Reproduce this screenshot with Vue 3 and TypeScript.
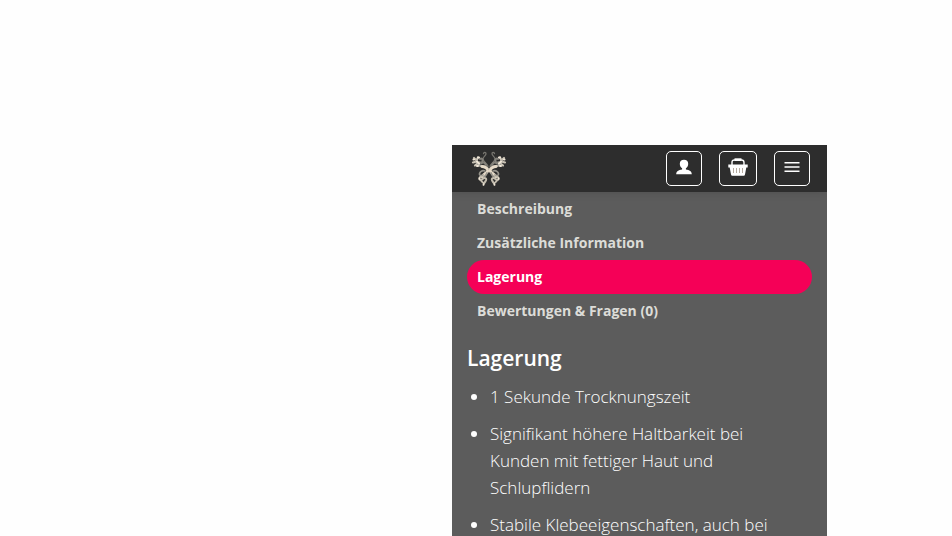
<script setup lang="ts">
import { ref } from 'vue'

const tabs: string[] = [
  'Beschreibung',
  'Zusätzliche Information',
  'Lagerung',
  'Bewertungen & Fragen (0)',
]
const active = ref<string>('Lagerung')

const facts: string[] = [
  '1 Sekunde Trocknungszeit',
  'Signifikant höhere Haltbarkeit bei Kunden mit fettiger Haut und Schlupflidern',
  'Stabile Klebeeigenschaften, auch bei',
]
</script>

<template>
  <div class="page">
    <div class="panel">
      <header class="bar">
        <a class="logo" href="#" aria-label="Startseite">
          <svg width="38" height="38" viewBox="0 0 38 38" fill="none" stroke-linecap="round">
            <g v-for="side in 2" :key="side" :transform="side === 2 ? 'translate(38 0) scale(-1 1)' : undefined">
              <path d="M13.500 3.500c.3-1.500 2.500-1.500 2.500.3 0 2-3 2.700-3 5.200 0 3 4.500 4 5 8" stroke="#77756f" stroke-width="1.300" />
              <path d="M10 9c1.500-1 3 0 2.500 2s-2 2-3 1M11 13.500c2-2 4-1 5 1.500" stroke="#85827b" stroke-width="2" />
              <path d="M4 8l2.500 2.500L8 7.500M3 12.500l3.500-1M5 15.500l3-2.500" stroke="#c9c2b4" stroke-width="2.200" />
              <path d="M6.500 11c2 2.500 1.500 4 4 5s5 .5 8 3.500" stroke="#a8a59d" stroke-width="2.200" />
              <path d="M8 7.500h1M3.500 9.500h.5M7 16h1M7 11.500l2 2" stroke="#efe6d7" stroke-width="2.100" />
              <path d="M12 16.500c3 0 5 1.500 6 4-1 3-5 3.500-6 6.500" stroke="#e6dac8" stroke-width="2.900" />
              <path d="M15 21c-3-1-5 .5-5.500 2.500s2 3 3.500 1.500M17 23c-1 2-1 3-3 4" stroke="#96938b" stroke-width="1.700" />
              <path d="M12 26.500c-3 0-3.500 3-1.500 3.500 2 .4 2-2 4-2 2.500 0 2 3 .5 3.500M11 30c0 2 2 2 3 3.500l1.500-2" stroke="#c5beb0" stroke-width="1.900" />
              <path d="M13.500 34v1M9.500 28v1" stroke="#efe6d7" stroke-width="1.700" />
            </g>
          </svg>
        </a>
        <nav class="actions" aria-label="Aktionen">
          <button class="action" type="button" aria-label="Mein Konto">
            <svg width="16" height="16" viewBox="0 0 16 16" fill="#fff">
              <path d="M8 .8C5.400 .8 3.800 2.400 3.800 4.800c0 2 .9 3.700 2.300 4.500v1.200C2.500 11 .3 12.200.2 15.200h15.600c-.1-3-2.300-4.200-5.900-4.700V9.300c1.400-.8 2.300-2.500 2.300-4.500C12.200 2.400 10.600.8 8 .8z" />
            </svg>
          </button>
          <button class="action wide" type="button" aria-label="Warenkorb">
            <svg width="20" height="18" viewBox="0 0 20 18">
              <path d="M4 7.500V4.500Q4 2 6.500 2h7Q16 2 16 4.500v3" fill="none" stroke="#fff" stroke-width="1.400" />
              <path d="M6.500 .3h7v2.700h-7z" fill="#fff" />
              <path d="M.3 6.500h19.400v3H18.300l-1.300 7q-.2 1.200-1.300 1.200H4.300q-1.100 0-1.300-1.200l-1.300-7H.3z" fill="#fff" />
              <path d="M5.500 10v5M8.500 10v5M11.500 10v5M14.500 10v5" stroke="#b5aba0" stroke-width="1" />
            </svg>
          </button>
          <button class="action" type="button" aria-label="Menü">
            <svg width="16" height="16" viewBox="0 0 16 16" fill="#fff">
              <path d="M.5 3h15v1.600H.5zM.5 7.200h15v1.600H.5zM.5 11.400h15V13H.5z" />
            </svg>
          </button>
        </nav>
      </header>

      <main class="content">
        <div class="tabs" role="tablist">
          <button
            v-for="tab in tabs"
            :key="tab"
            class="tab"
            :class="{ active: tab === active }"
            type="button"
            role="tab"
            :aria-selected="tab === active"
            @click="active = tab"
          >{{ tab }}</button>
        </div>
        <h2 class="title">Lagerung</h2>
        <ul class="facts">
          <li v-for="fact in facts" :key="fact">{{ fact }}</li>
        </ul>
      </main>
    </div>
  </div>
</template>

<style>
body {
  background: #fefefe;
}
</style>

<style scoped>
.page {
  display: grid;
  grid-template-columns: 452fr 375fr 125fr;
  box-sizing: border-box;
  height: 100vh;
  padding-top: 145px;
  overflow: hidden;
  font-family: "Open Sans", sans-serif;
}
.panel {
  grid-column: 2;
  min-width: 0;
  overflow: hidden;
  background: #5c5c5c;
  color: #fff;
}
.bar {
  display: flex;
  align-items: center;
  justify-content: space-between;
  box-sizing: border-box;
  height: 47px;
  padding: 0 17px 0 18px;
  background: #2d2d2d;
  box-shadow: 0 1px 8px rgba(0, 0, 0, 0.12);
}
.logo,
.logo svg {
  display: block;
}
.actions {
  display: flex;
  gap: 17px;
  padding-bottom: 1px;
}
.action {
  display: flex;
  align-items: center;
  justify-content: center;
  box-sizing: border-box;
  width: 36px;
  height: 35px;
  padding: 0 0 2px;
  border: 1px solid #fff;
  border-radius: 5px;
  background: transparent;
  cursor: pointer;
}
.wide {
  width: 38px;
}
.content {
  padding: 0 15px;
}
.tabs {
  display: flex;
  flex-direction: column;
}
.tab {
  height: 34px;
  padding: 0 10px;
  border: 0;
  border-radius: 17px;
  background: transparent;
  color: #dcdcd8;
  font: 700 14px/20px "Open Sans", sans-serif;
  text-align: left;
  cursor: pointer;
}
.tab.active {
  background: #f50057;
  color: #fff;
}
.title {
  margin: 15px 0 10px;
  font-size: 21px;
  font-weight: 600;
  line-height: 30px;
}
.facts {
  margin: 0;
  padding: 0 20px 0 23px;
  font-size: 17px;
  font-weight: 300;
  line-height: 27px;
}
.facts li {
  margin-bottom: 10px;
}
</style>
